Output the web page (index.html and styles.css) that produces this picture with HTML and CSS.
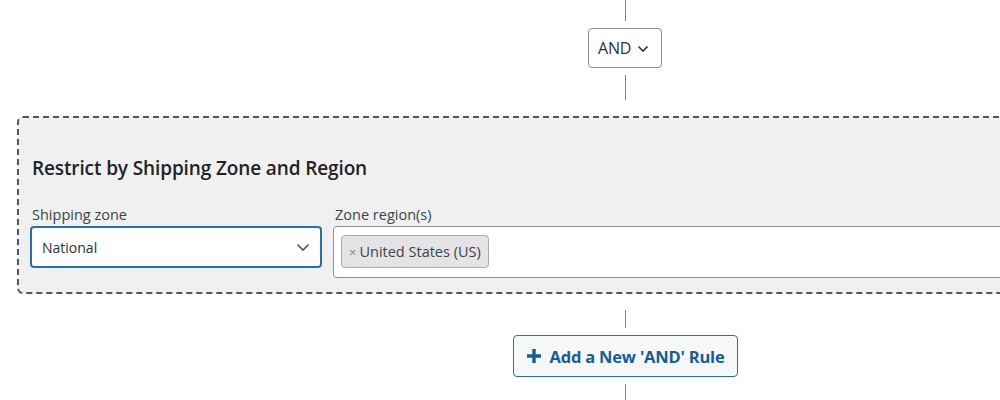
FILE: index.html
```html
<!DOCTYPE html>
<html>
<head>
<meta charset="utf-8">
<link rel="stylesheet" href="styles.css">
</head>
<body>
<div class="flow">
  <div class="connector connector-top"></div>
  <div class="logic-select">
    <span>AND</span>
    <svg class="chev-small" viewBox="0 0 12 8" width="12" height="8"><path d="M1.5 1.5 L6 6 L10.5 1.5" fill="none" stroke="#2c3338" stroke-width="1.6"/></svg>
  </div>
  <div class="connector connector-mid"></div>
  <div class="rule-box">
    <h3 class="rule-title">Restrict by Shipping Zone and Region</h3>
    <div class="fields">
      <div class="field">
        <label class="field-label">Shipping zone</label>
        <div class="select">
          <span>National</span>
          <svg class="chev" viewBox="0 0 14 9" width="14" height="9"><path d="M1.5 1.5 L7 7 L12.5 1.5" fill="none" stroke="#50575e" stroke-width="1.7"/></svg>
        </div>
      </div>
      <div class="field">
        <label class="field-label">Zone region(s)</label>
        <div class="multi">
          <span class="chip"><span class="chip-x">×</span>United States (US)</span>
        </div>
      </div>
    </div>
  </div>
  <div class="connector connector-low"></div>
  <button class="add-rule">
    <svg class="plus" viewBox="0 0 16 16" width="16" height="16"><path d="M8 1 V15 M1 8 H15" stroke="#135e96" stroke-width="3.4" fill="none"/></svg>
    <span>Add a New 'AND' Rule</span>
  </button>
  <div class="connector connector-bottom"></div>
</div>
</body>
</html>
```
FILE: styles.css
```css
html, body {
  margin: 0;
  padding: 0;
  background: #ffffff;
  overflow: hidden;
}
body {
  font-family: "Open Sans", "Noto Sans", sans-serif;
  color: #2c3338;
}
.flow {
  width: 1216px;
  margin-left: 17px;
  display: flex;
  flex-direction: column;
  align-items: center;
}
.connector {
  width: 1px;
  background: #5b8db3;
}
.connector-top { height: 21px; margin-bottom: 7px; }
.connector-mid { height: 25px; margin-top: 7px; margin-bottom: 16px; }
.connector-low { height: 18px; margin-top: 16px; margin-bottom: 7px; }
.connector-bottom { height: 20px; margin-top: 7px; }

.logic-select {
  box-sizing: border-box;
  width: 74px;
  height: 40px;
  border: 1px solid #8c8f94;
  border-radius: 4px;
  background: #fff;
  display: flex;
  align-items: center;
  padding-left: 9px;
  gap: 6px;
  font-size: 16px;
  letter-spacing: -0.2px;
}
.chev-small { margin-top: 1px; }

.rule-box {
  box-sizing: border-box;
  align-self: stretch;
  background: #f0f0f0;
  border: 2px dashed #50575e;
  border-radius: 6px;
  padding: 37px 11px 14px;
}
.rule-title {
  margin: 0 0 24px 2px;
  font-size: 19px;
  font-weight: 600;
  line-height: 26px;
  color: #1d2327;
  letter-spacing: -0.12px;
}
.fields {
  display: grid;
  grid-template-columns: 292px 1fr;
  column-gap: 11px;
}
.field {
  display: flex;
  flex-direction: column;
}
.field-label {
  font-size: 14.5px;
  line-height: 19px;
  margin-left: 2px;
  margin-bottom: 2px;
  color: #3c434a;
}
.select {
  box-sizing: border-box;
  height: 42px;
  border: 2px solid #2271b1;
  border-radius: 4px;
  background: #fff;
  display: flex;
  align-items: center;
  justify-content: space-between;
  padding: 0 10px 0 10px;
  font-size: 14px;
  color: #2c3338;
}
.multi {
  box-sizing: border-box;
  height: 52px;
  border: 1px solid #8c8f94;
  border-radius: 4px;
  background: #fff;
  display: flex;
  align-items: flex-start;
  padding: 8px 7px;
}
.chip {
  box-sizing: border-box;
  height: 33px;
  display: inline-flex;
  align-items: center;
  padding: 0 7px 0 7px;
  background: #e4e4e4;
  border: 1px solid #aaaaaa;
  border-radius: 4px;
  font-size: 14.5px;
  color: #3c434a;
}
.chip-x {
  color: #888;
  margin-right: 3px;
  font-size: 13px;
}
.add-rule {
  box-sizing: border-box;
  width: 225px;
  height: 42px;
  border: 1px solid #2271b1;
  border-radius: 4px;
  background: #f6f7f7;
  display: flex;
  align-items: center;
  justify-content: center;
  gap: 8px;
  padding: 0;
  font-family: "Open Sans", "Noto Sans", sans-serif;
  font-size: 16.5px;
  font-weight: 700;
  color: #135e96;
  letter-spacing: -0.2px;
}
```
